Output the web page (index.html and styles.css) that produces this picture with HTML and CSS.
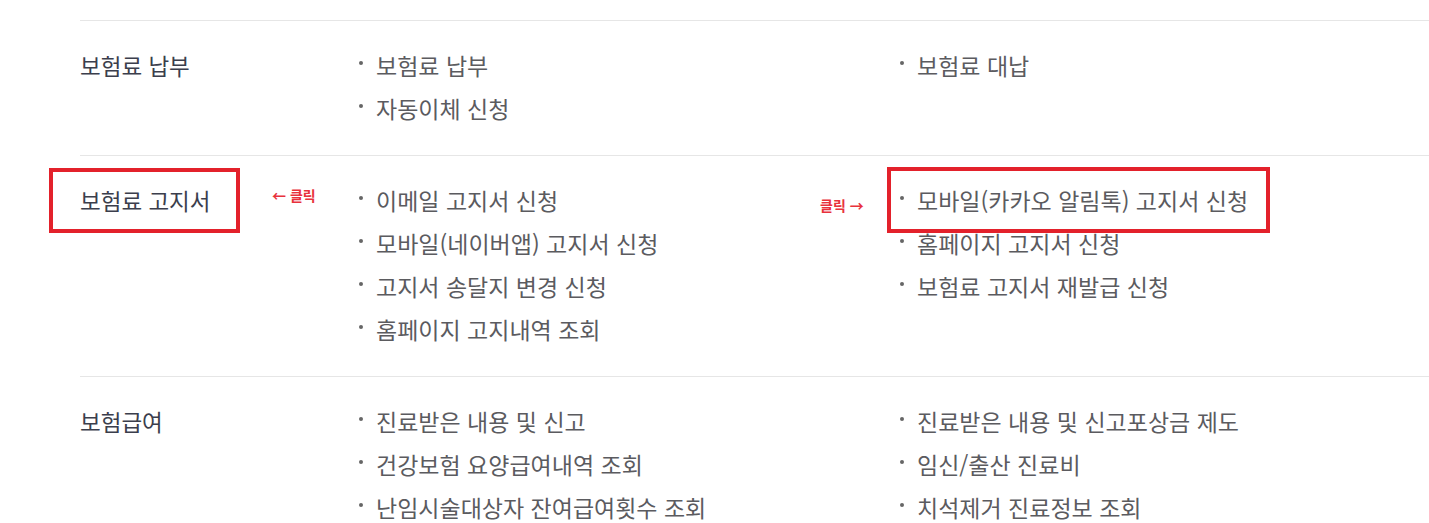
FILE: index.html
```html
<!DOCTYPE html>
<html lang="ko">
<head>
    <meta charset="UTF-8">
    <meta name="viewport" content="width=device-width, initial-scale=1.0">
    <title>보험료</title>
    <link rel="stylesheet" href="styles.css">
</head>
<body>
<div id="menuList">
    <div class="menu-row">
        <div class="menu-title">보험료 납부</div>
        <ul class="menu-col">
            <li>보험료 납부</li>
            <li>자동이체 신청</li>
        </ul>
        <ul class="menu-col">
            <li>보험료 대납</li>
        </ul>
    </div>

    <!-- 고지서: annotated row -->
    <div class="menu-row">
        <div class="menu-title">보험료 고지서</div>
        <ul class="menu-col">
            <li>이메일 고지서 신청</li>
            <li>모바일(네이버앱) 고지서 신청</li>
            <li>고지서 송달지 변경 신청</li>
            <li>홈페이지 고지내역 조회</li>
        </ul>
        <ul class="menu-col">
            <li>모바일(카카오 알림톡) 고지서 신청</li>
            <li>홈페이지 고지서 신청</li>
            <li>보험료 고지서 재발급 신청</li>
        </ul>
        <div class="mark mark-title"></div>
        <div class="mark mark-item"></div>
        <span class="note note-left">&larr; 클릭</span>
        <span class="note note-right">클릭 &rarr;</span>
    </div>

    <div class="menu-row">
        <div class="menu-title">보험급여</div>
        <ul class="menu-col">
            <li>진료받은 내용 및 신고</li>
            <li>건강보험 요양급여내역 조회</li>
            <li>난임시술대상자 잔여급여횟수 조회</li>
        </ul>
        <ul class="menu-col">
            <li>진료받은 내용 및 신고포상금 제도</li>
            <li>임신/출산 진료비</li>
            <li>치석제거 진료정보 조회</li>
        </ul>
    </div>
</div>
</body>
</html>
```

FILE: styles.css
```css
body {
    margin: 0;
    background: #fff;
    font-family: "Noto Sans CJK KR", "Noto Sans", sans-serif;
    overflow: hidden;
}

#menuList {
    padding: 20px 0 0 80px;
}

.menu-row {
    position: relative;
    display: grid;
    grid-template-columns: 278px 541px 1fr;
    border-top: 1px solid #e6e6e6;
    padding: 23px 0 25px;
}

.menu-title {
    font-size: 22.5px;
    line-height: 43px;
    color: #3b3e4c;
}

.menu-col {
    list-style: none;
    margin: 0;
    padding: 0;
}

.menu-col li {
    position: relative;
    padding-left: 18px;
    font-size: 23px;
    line-height: 43px;
    color: #5b5b5f;
}

.menu-col li::before {
    content: "";
    position: absolute;
    left: 1px;
    top: 17px;
    width: 4px;
    height: 4px;
    border-radius: 50%;
    background: #666;
}

/* red highlight boxes */
.mark {
    position: absolute;
    border: 4px solid #e3212b;
}

.mark-title {
    left: -31px;
    top: 12px;
    width: 183px;
    height: 57px;
}

.mark-item {
    left: 807px;
    top: 11px;
    width: 375px;
    height: 58px;
}

.note {
    position: absolute;
    font-size: 14px;
    font-weight: bold;
    color: #e8323c;
}

.note-left {
    left: 192px;
    top: 29px;
}

.note-right {
    left: 740px;
    top: 39px;
}
```
